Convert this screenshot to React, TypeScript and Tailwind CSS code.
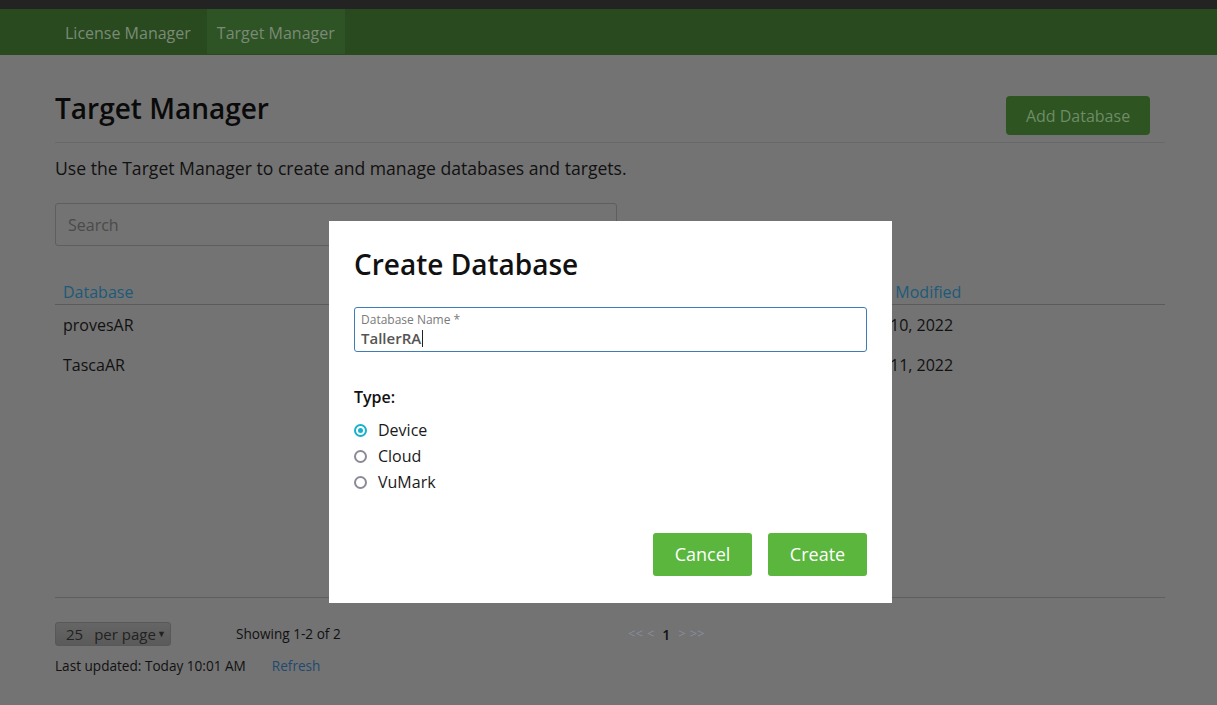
import React from "react";

const font = { fontFamily: '"Open Sans", "Noto Sans", sans-serif' };

const Radio: React.FC<{ label: string; checked?: boolean }> = ({ label, checked }) => (
  <label className="flex h-[26px] items-center">
    {checked ? (
      <span className="flex h-[13px] w-[13px] items-center justify-center rounded-full border-2 border-[#17b1cb]">
        <span className="h-[5px] w-[5px] rounded-full bg-[#17b1cb]" />
      </span>
    ) : (
      <span className="h-[13px] w-[13px] rounded-full border-2 border-[#8b8b97]" />
    )}
    <span className="ml-[11px] text-[16px] text-[#1a1a1a]">{label}</span>
  </label>
);

const CreateDatabaseModal: React.FC = () => (
  <div className="absolute left-[329px] top-[221px] w-[563px] bg-white px-[25px] pb-[27px] pt-[24px]">
    <h2 className="text-[28px] font-semibold leading-[38px] text-[#111]">Create Database</h2>
    <div className="mt-[24px] h-[45px] rounded-[3px] border border-[#3f7db7] px-[6px] pt-[4px]">
      <div className="text-[12px] leading-[16px] text-[#7a7a7a]">Database Name *</div>
      <div className="flex items-center text-[15px] font-semibold leading-[20px] text-[#555]">
        TallerRA
        <span className="ml-[1px] h-[17px] w-px bg-[#222]" />
      </div>
    </div>
    <div className="mt-[33px] text-[16px] font-semibold leading-6 text-[#111]">Type:</div>
    <div className="mt-[8px] flex flex-col">
      <Radio label="Device" checked />
      <Radio label="Cloud" />
      <Radio label="VuMark" />
    </div>
    <div className="mt-[38px] flex justify-end gap-[16px]">
      <button className="h-[43px] w-[99px] rounded-[3px] bg-[#5ab63d] text-[18px] text-white">Cancel</button>
      <button className="h-[43px] w-[99px] rounded-[3px] bg-[#5ab63d] text-[18px] text-white">Create</button>
    </div>
  </div>
);

export default function App() {
  return (
    <div className="relative h-[705px] w-[1217px] overflow-hidden bg-[#737373]" style={font}>
      <div className="h-[9px] bg-[#232323]" />
      <nav className="flex h-[46px] bg-[#284a1e] pl-[55px]">
        <a className="flex items-center px-[10px] pt-[2px] text-[16px] text-[#7b8a77]">License Manager</a>
        <a className="ml-[6px] flex h-[45px] items-center bg-[#2e5324] px-[10px] pt-[2px] text-[16px] text-[#7b8a77]">
          Target Manager
        </a>
      </nav>

      <main className="pl-[55px] pr-[52px]">
        <div className="flex items-start justify-between">
          <h1 className="mt-[35px] text-[28px] font-semibold leading-[36px] text-[#0a0a0a]">Target Manager</h1>
          <button className="mr-[15px] mt-[41px] h-[39px] w-[144px] rounded-[4px] bg-[#2d5421] text-[16px] text-[#6f8c67]">
            Add Database
          </button>
        </div>
        <div className="mt-[7px] h-px bg-[#686868]" />
        <p className="mt-[12px] text-[17.6px] leading-[26px] text-[#111]">
          Use the Target Manager to create and manage databases and targets.
        </p>
        <div className="mt-[22px] flex h-[43px] w-[562px] items-center rounded-[3px] border border-[#5e5e5e] px-[12px] text-[16px] text-[#4a4a4a]">
          Search
        </div>

        <div className="mt-[34px] flex h-[25px] items-center border-b border-[#5b5b5b] text-[16px] text-[#1d5a79]">
          <span className="pl-[8px]">Database</span>
          <span className="ml-auto w-[309px]">Date Modified</span>
        </div>
        <div className="flex h-[40px] items-center text-[16px] text-[#111]">
          <span className="pl-[8px]">provesAR</span>
          <span className="ml-auto w-[309px]">Mar 10, 2022</span>
        </div>
        <div className="flex h-[40px] items-center text-[16px] text-[#111]">
          <span className="pl-[8px]">TascaAR</span>
          <span className="ml-auto w-[309px]">Mar 11, 2022</span>
        </div>

        <div className="mt-[212px] h-px bg-[#5e5e5e]" />
        <div className="mt-[24px] flex items-center">
          <div className="flex h-[24px] w-[116px] items-center rounded-[3px] border border-[#585858] bg-gradient-to-b from-[#656565] to-[#5a5a5a] pl-[10px] text-[15px] text-[#222]">
            <span>25</span>
            <span className="ml-[11px]">per page</span>
            <span className="ml-[1px] text-[9px]">▼</span>
          </div>
          <span className="ml-[65px] w-[392px] text-[13.6px] text-[#111]">Showing 1-2 of 2</span>
          <div className="flex items-center gap-[4px] text-[13px] text-[#868c9b]">
            <span>&lt;&lt;</span>
            <span>&lt;</span>
            <span className="mx-[4px] text-[14px] font-semibold text-[#111]">1</span>
            <span>&gt;</span>
            <span>&gt;&gt;</span>
          </div>
        </div>
        <div className="mt-[10px] flex text-[13.6px] leading-[20px]">
          <span className="text-[#111]">Last updated: Today 10:01 AM</span>
          <span className="ml-[26px] text-[#1f4a6e]">Refresh</span>
        </div>
      </main>

      <CreateDatabaseModal />
    </div>
  );
}
